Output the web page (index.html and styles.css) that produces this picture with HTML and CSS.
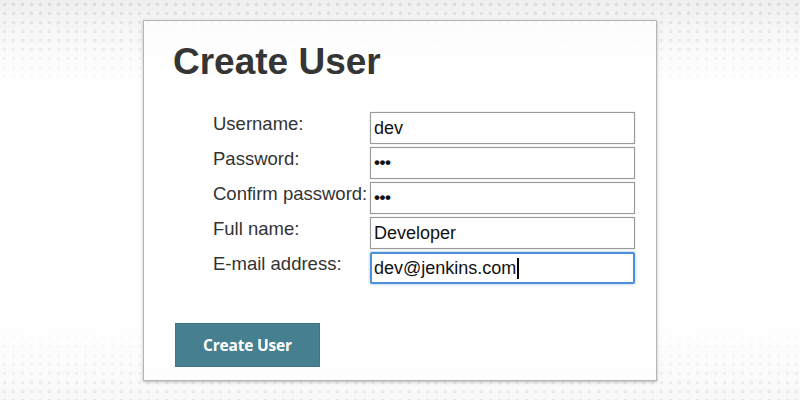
FILE: index.html
```html
<!DOCTYPE html>
<html lang="en">
<head>
    <meta charset="UTF-8">
    <meta name="viewport" content="width=device-width, initial-scale=1.0">
    <title>Create User</title>
    <link rel="stylesheet" href="styles.css">
</head>
<body>
    <div class="card">
        <h1 class="title">Create User</h1>

        <div class="form">
            <div class="label">Username:</div>
            <div class="field">dev</div>

            <div class="label">Password:</div>
            <div class="field secret">&bull;&bull;&bull;</div>

            <div class="label">Confirm password:</div>
            <div class="field secret">&bull;&bull;&bull;</div>

            <div class="label">Full name:</div>
            <div class="field">Developer</div>

            <div class="label">E-mail address:</div>
            <div class="field focused">dev@jenkins.com<span class="caret"></span></div>
        </div>

        <button class="submit">Create User</button>
    </div>
</body>
</html>
```

FILE: styles.css
```css
html, body {
    height: 100%;
}
body {
    margin: 0;
    padding-top: 20px;
    box-sizing: border-box;
    font-family: "Liberation Sans", Arial, sans-serif;
    color: #333;
    background:
        linear-gradient(to bottom, rgba(255,255,255,0.1) 0, #fff 90px, #fff 320px, rgba(255,255,255,0.45) 400px),
        radial-gradient(circle, #d8d8d8 0 1.6px, transparent 2.2px) 0 0 / 9px 9px,
        linear-gradient(to bottom, #ededed, #fafafa 100px, #fafafa 300px, #f2f2f2);
}
.card {
    width: 514px;
    margin: 0 auto;
    box-sizing: border-box;
    padding: 20px 29px 13px;
    border: 1px solid #b5b5b5;
    box-shadow: 0 1px 3px rgba(0, 0, 0, 0.25);
    background: linear-gradient(to bottom, rgba(255,255,255,0.75), #fff 90px, #fff 290px, rgba(255,255,255,0.8));
}
.title {
    margin: 0;
    font-size: 37px;
    line-height: 42px;
    font-weight: bold;
    color: #353535;
}
.form {
    display: grid;
    grid-template-columns: 157px 265px;
    row-gap: 3px;
    margin: 29px 0 0 40px;
}
.label {
    padding-top: 1px;
    font-size: 18.5px;
    line-height: 21px;
    color: #333;
}
.field {
    height: 32px;
    box-sizing: border-box;
    display: flex;
    align-items: center;
    padding-left: 3px;
    border: 1px solid #999;
    box-shadow: inset 0 0 1px #ccc, 0 0 1px #bbb;
    background: #fff;
    font-size: 18px;
    color: #111;
}
.secret {
    font-size: 17px;
    letter-spacing: -0.5px;
    font-weight: bold;
}
.focused {
    border: 2px solid #4d90d8;
    border-radius: 2px;
    padding-left: 2px;
    box-shadow: 0 0 3px rgba(77, 144, 216, 0.6);
}
.caret {
    display: inline-block;
    width: 2px;
    height: 21px;
    margin-left: 1px;
    background: #000;
}
.submit {
    display: block;
    margin: 39px 0 0 2px;
    width: 145px;
    height: 44px;
    border: 1px solid #3f7686;
    background: #467f8f;
    color: #fff;
    font-family: "Open Sans", sans-serif;
    font-weight: bold;
    font-size: 15.5px;
    letter-spacing: -0.2px;
    cursor: pointer;
}
```
